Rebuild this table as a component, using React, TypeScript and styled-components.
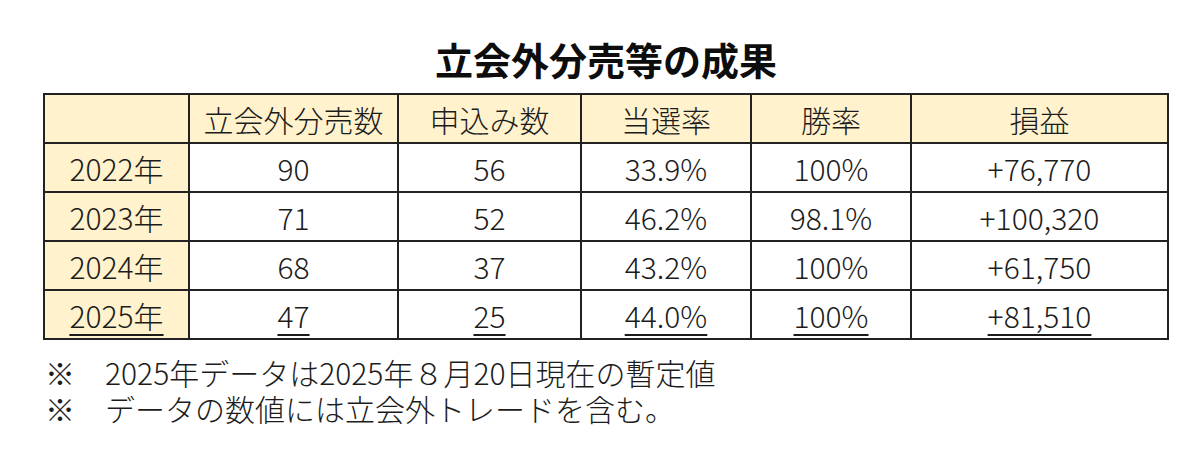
import styled, { createGlobalStyle } from 'styled-components';

const GlobalStyle = createGlobalStyle`
  html, body {
    margin: 0;
    padding: 0;
    background: #ffffff;
  }

  body {
    font-family: 'Noto Sans CJK JP', 'Noto Sans', sans-serif;
    color: #1c1c1c;
  }
`;

type Row = {
  year: string;
  sales: string;
  applied: string;
  winRate: string;
  victory: string;
  profit: string;
  provisional?: boolean;
};

const headers = ['立会外分売数', '申込み数', '当選率', '勝率', '損益'];
const columnWidths = [145, 209, 183, 170, 160, 257];

const rows: Row[] = [
  { year: '2022年', sales: '90', applied: '56', winRate: '33.9%', victory: '100%', profit: '+76,770' },
  { year: '2023年', sales: '71', applied: '52', winRate: '46.2%', victory: '98.1%', profit: '+100,320' },
  { year: '2024年', sales: '68', applied: '37', winRate: '43.2%', victory: '100%', profit: '+61,750' },
  { year: '2025年', sales: '47', applied: '25', winRate: '44.0%', victory: '100%', profit: '+81,510', provisional: true },
];

const notes = ['2025年データは2025年８月20日現在の暫定値', 'データの数値には立会外トレードを含む。'];

const App = () => {
  return (
    <>
      <GlobalStyle />
      <Page>
        <Title>立会外分売等の成果</Title>
        <ResultTable>
          <colgroup>
            {columnWidths.map((w, i) => (
              <col key={i} style={{ width: w }} />
            ))}
          </colgroup>
          <thead>
            <tr>
              <HeadCell />
              {headers.map((h) => (
                <HeadCell key={h}>{h}</HeadCell>
              ))}
            </tr>
          </thead>
          <tbody>
            {rows.map((r) => (
              <tr key={r.year}>
                <Cell $head>
                  <Value $underline={r.provisional}>{r.year}</Value>
                </Cell>
                {[r.sales, r.applied, r.winRate, r.victory, r.profit].map((v, i) => (
                  <Cell key={i}>
                    <Value $underline={r.provisional}>{v}</Value>
                  </Cell>
                ))}
              </tr>
            ))}
          </tbody>
        </ResultTable>
        <Notes>
          {notes.map((n) => (
            <Note key={n}>
              <Mark>※</Mark>
              <span>{n}</span>
            </Note>
          ))}
        </Notes>
      </Page>
    </>
  );
};

export default App;

const Page = styled.div`
  width: 1200px;
  height: 457px;
  padding: 36px 0 0 43px;
  box-sizing: border-box;
`;

const Title = styled.h1`
  margin: 0 0 11px;
  width: 1126px;
  text-align: center;
  font-size: 38px;
  line-height: 46px;
  font-weight: 700;
  color: #0d0d0d;
`;

const ResultTable = styled.table`
  border-collapse: collapse;
  table-layout: fixed;
  width: 1126px;
  border: 2px solid #222;
`;

const HeadCell = styled.th`
  height: 47px;
  padding: 0;
  border: 2px solid #222;
  background: #fff2cc;
  font-size: 30px;
  font-weight: 300;
  line-height: 1;
  text-align: center;
  vertical-align: middle;
`;

const Cell = styled.td<{ $head?: boolean }>`
  height: 47px;
  padding: 0;
  border: 2px solid #222;
  background: ${({ $head }) => ($head ? '#fff2cc' : '#ffffff')};
  font-size: 30px;
  font-weight: 300;
  line-height: 1;
  text-align: center;
  vertical-align: middle;
`;

const Value = styled.span<{ $underline?: boolean }>`
  text-decoration: ${({ $underline }) => ($underline ? 'underline' : 'none')};
  text-decoration-thickness: 1.5px;
  text-underline-offset: 6px;
`;

const Notes = styled.div`
  margin-top: 14px;
  display: flex;
  flex-direction: column;
`;

const Note = styled.div`
  display: grid;
  grid-template-columns: 62px 1fr;
  font-size: 30px;
  font-weight: 300;
  line-height: 36px;
`;

const Mark = styled.span`
  padding-left: 2px;
`;
